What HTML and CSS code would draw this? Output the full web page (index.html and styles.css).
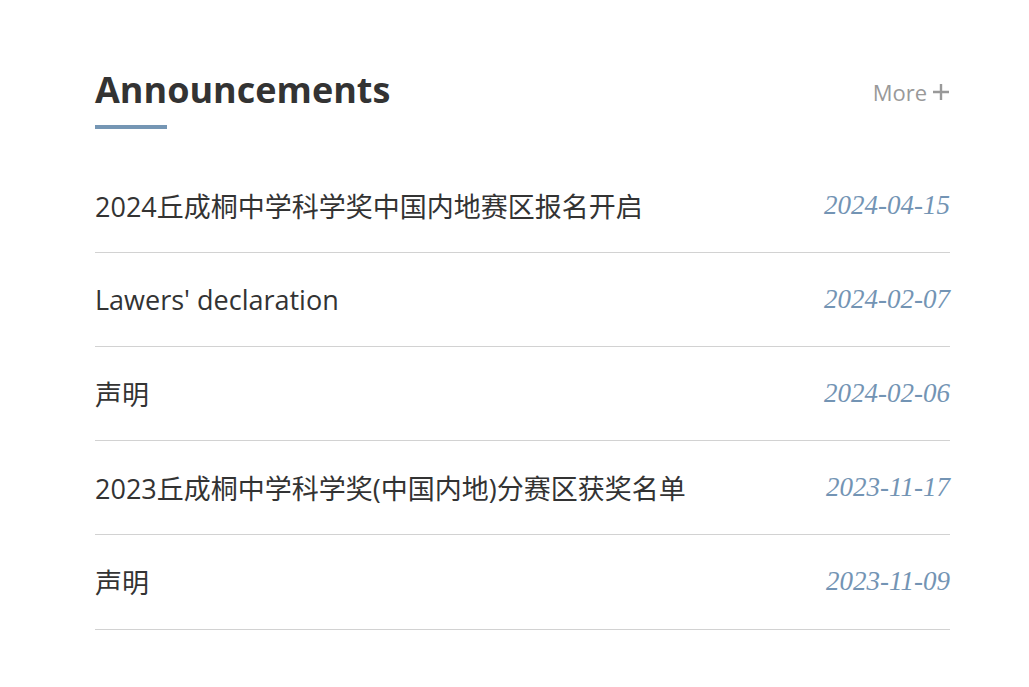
FILE: index.html
```html
<!DOCTYPE html>
<html lang="zh">
<head>
<meta charset="utf-8">
<title>Announcements</title>
<link rel="stylesheet" href="styles.css">
</head>
<body>
<section class="notice">
  <header class="notice-head">
    <div class="title-wrap">
      <h2 class="title">Announcements</h2>
      <span class="title-bar"></span>
    </div>
    <a class="more" href="#">More <svg class="plus" viewBox="0 0 18 18" width="18" height="18"><path d="M9 1v16M1 9h16" stroke="#999" stroke-width="2.4" fill="none"/></svg></a>
  </header>
  <ul class="list">
    <li class="item"><span class="item-title">2024丘成桐中学科学奖中国内地赛区报名开启</span><span class="date">2024-04-15</span></li>
    <li class="item"><span class="item-title">Lawers' declaration</span><span class="date">2024-02-07</span></li>
    <li class="item"><span class="item-title">声明</span><span class="date">2024-02-06</span></li>
    <li class="item"><span class="item-title">2023丘成桐中学科学奖(中国内地)分赛区获奖名单</span><span class="date">2023-11-17</span></li>
    <li class="item"><span class="item-title">声明</span><span class="date">2023-11-09</span></li>
  </ul>
</section>
</body>
</html>
```
FILE: styles.css
```css
html, body {
  margin: 0;
  padding: 0;
  background: #fff;
}
body {
  font-family: "Open Sans", "Noto Sans CJK SC", sans-serif;
  color: #333;
}
.notice {
  width: 855px;
  margin: 0 0 0 95px;
  padding-top: 66px;
}
.notice-head {
  display: flex;
  justify-content: space-between;
  align-items: flex-start;
}
.title-wrap {
  display: flex;
  flex-direction: column;
}
.title {
  margin: 0;
  font-size: 36px;
  font-weight: 700;
  line-height: 48px;
  color: #333;
}
.title-bar {
  display: block;
  width: 72px;
  height: 4px;
  margin-top: 11px;
  background: #7596b4;
}
.more {
  display: flex;
  align-items: center;
  gap: 5px;
  margin-top: 11px;
  font-size: 22px;
  color: #999;
  text-decoration: none;
  line-height: 30px;
}
.plus {
  display: block;
}
.list {
  list-style: none;
  margin: 29.6px 0 0;
  padding: 0;
}
.item {
  display: flex;
  justify-content: space-between;
  align-items: center;
  height: 93.2px;
  border-bottom: 1px solid #d2d2d2;
}
.item-title {
  font-size: 27px;
  color: #333;
}
.date {
  font-family: "Liberation Serif", serif;
  font-style: italic;
  font-size: 27px;
  color: #7394b4;
}
```
